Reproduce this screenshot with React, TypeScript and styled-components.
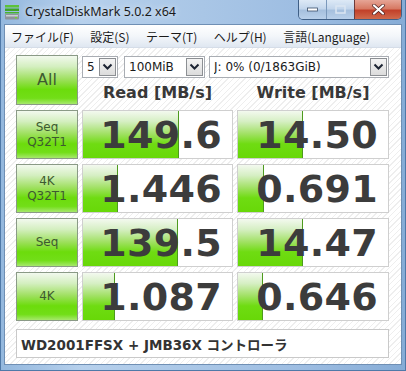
import { Fragment } from "react";
import styled, { createGlobalStyle } from "styled-components";

const GlobalStyle = createGlobalStyle`
  html, body { margin: 0; padding: 0; background: #ffffff; }
  body { width: 406px; height: 371px; overflow: hidden; }
`;

const Window = styled.div`
  width: 406px;
  height: 371px;
  box-sizing: border-box;
  display: flex;
  flex-direction: column;
  background: linear-gradient(to right, #94b8de 0%, #b6d0ec 20%, #a9c6e6 50%, #9dbde2 75%, #86acd6 100%);
  border: 1px solid #4f79a8;
  border-top: none;
  padding: 0 3px 5px 3px;
`;

const TitleBar = styled.div`
  height: 24px;
  display: flex;
  align-items: flex-start;
  flex-shrink: 0;
`;

const TitleIcon = styled.svg`
  width: 16px;
  height: 16px;
  margin: 4px 5px 0 0;
  flex-shrink: 0;
`;

const TitleText = styled.div`
  font-family: "Noto Sans", "Open Sans", sans-serif;
  font-size: 12.5px;
  line-height: 24px;
  color: #1b1b1b;
  text-shadow: 0 0 6px rgba(255, 255, 255, 0.9);
`;

const Controls = styled.div`
  display: flex;
  margin-left: auto;
  height: 19px;
  border: 1px solid #3f5f86;
  border-top: none;
  border-radius: 0 0 5px 5px;
  overflow: hidden;
`;

const CtrlButton = styled.div<{ $w: number; $close?: boolean }>`
  width: ${(p) => p.$w}px;
  display: flex;
  align-items: center;
  justify-content: center;
  border-left: ${(p) => (p.$close ? "1px solid #6b3a3a" : "1px solid #7a98bb")};
  background: ${(p) =>
    p.$close
      ? "linear-gradient(to bottom, #e6a596 0%, #d77a64 45%, #c2412a 55%, #cf6a4c 100%)"
      : "linear-gradient(to bottom, #dde9f6 0%, #c3d6ec 45%, #a6c0de 55%, #b9d0ea 100%)"};
  &:first-child { border-left: none; }
`;

const Client = styled.div`
  flex: 1;
  display: flex;
  flex-direction: column;
  border: 1px solid #6f8fb4;
  background: repeating-linear-gradient(135deg, #ffffff 0px, #ffffff 3px, #eeeeee 3px, #eeeeee 4px);
`;

const MenuBar = styled.div`
  height: 23px;
  display: flex;
  align-items: center;
  gap: 16.5px;
  padding-left: 6px;
  background: linear-gradient(to bottom, #ffffff 0%, #f3f6fa 50%, #dfe7f1 100%);
  border-bottom: 1px solid #d5dde8;
  box-sizing: border-box;
`;

const MenuItem = styled.span`
  font-family: "Noto Sans CJK JP", "Noto Sans", sans-serif;
  font-size: 12px;
  color: #1a1a1a;
`;

const Body = styled.div`
  padding: 7px 0 0 11px;
`;

const Grid = styled.div`
  display: grid;
  grid-template-columns: 62px 151px 152px;
  grid-template-rows: 50px repeat(4, 49px);
  column-gap: 4px;
  row-gap: 5px;
`;

const LabelButton = styled.div<{ $big?: boolean }>`
  box-sizing: border-box;
  border: 1px solid #8a9a86;
  display: flex;
  flex-direction: column;
  align-items: center;
  justify-content: center;
  background: linear-gradient(to bottom, #f2f9ee 0%, #d4efc0 22%, #9fe060 48%, #6cdc0c 70%, #72de18 88%, #a6e86c 100%);
  font-family: "DejaVu Sans", Verdana, sans-serif;
  font-size: ${(p) => (p.$big ? "16px" : "12px")};
  line-height: ${(p) => (p.$big ? "18px" : "15px")};
  color: #3d5a30;
`;

const TopCell = styled.div`
  grid-column: 2 / 4;
  display: flex;
  flex-direction: column;
`;

const SelectRow = styled.div`
  display: flex;
  height: 22px;
  margin-top: 1px;
`;

const Select = styled.div<{ $w?: number; $gap?: number }>`
  box-sizing: border-box;
  ${(p) => (p.$w ? `width: ${p.$w}px; flex-shrink: 0;` : "flex: 1;")}
  margin-right: ${(p) => p.$gap ?? 0}px;
  display: flex;
  align-items: center;
  background: #ffffff;
  border: 1px solid #a9adb3;
  font-family: "DejaVu Sans", Verdana, sans-serif;
  font-size: 12px;
  color: #1a1a1a;
  padding: 0 1px 0 4px;
`;

const SelectText = styled.span`
  flex: 1;
  white-space: nowrap;
  overflow: hidden;
`;

const Arrow = styled.div`
  width: 17px;
  height: 18px;
  box-sizing: border-box;
  border: 1px solid #8c8f93;
  background: linear-gradient(to bottom, #f4f4f4, #dcdcdc);
  display: flex;
  align-items: center;
  justify-content: center;
`;

const Headers = styled.div`
  flex: 1;
  display: grid;
  grid-template-columns: 151px 152px;
  column-gap: 4px;
  align-items: center;
`;

const Header = styled.div`
  text-align: center;
  font-family: "DejaVu Sans", Verdana, sans-serif;
  font-weight: bold;
  font-size: 16px;
  color: #383838;
  padding-top: 2px;
`;

const ValueBox = styled.div`
  position: relative;
  box-sizing: border-box;
  border: 1px solid #cfcfcf;
  background: #ffffff;
  overflow: hidden;
  display: flex;
  align-items: center;
  justify-content: flex-end;
  padding-right: 10px;
`;

const Bar = styled.div`
  position: absolute;
  left: 0;
  top: 0;
  bottom: 0;
  border-right: 1px solid #4d9a1e;
  background: linear-gradient(to bottom, #f3f9ef 0%, #d6efc4 22%, #a2e166 48%, #6fdc12 70%, #68d808 100%);
`;

const Value = styled.span`
  position: relative;
  font-family: "DejaVu Sans", Verdana, sans-serif;
  font-weight: bold;
  font-size: 38px;
  line-height: 1;
  color: #3c3c3c;
  letter-spacing: 0.3px;
`;

const Comment = styled.div`
  margin-top: 8px;
  width: 373px;
  height: 29px;
  box-sizing: border-box;
  border: 1px solid #c9c9c9;
  background: #ffffff;
  display: flex;
  align-items: center;
  padding-left: 4px;
  font-family: "DejaVu Sans", Verdana, "Noto Sans CJK JP", sans-serif;
  font-weight: bold;
  font-size: 13.5px;
  color: #333333;
`;

const rows = [
  { label: ["Seq", "Q32T1"], read: "149.6", rw: 95, write: "14.50", ww: 64 },
  { label: ["4K", "Q32T1"], read: "1.446", rw: 34, write: "0.691", ww: 25 },
  { label: ["Seq"], read: "139.5", rw: 94, write: "14.47", ww: 64 },
  { label: ["4K"], read: "1.087", rw: 31, write: "0.646", ww: 24 },
];

function Chevron() {
  return (
    <svg width="11" height="8" viewBox="0 0 11 8">
      <path d="M1.5 1.5 L5.5 5.5 L9.5 1.5" fill="none" stroke="#1c2433" strokeWidth="2" />
    </svg>
  );
}

export default function App() {
  return (
    <>
      <GlobalStyle />
      <Window>
        <TitleBar>
          <TitleIcon viewBox="0 0 16 16">
            <rect x="1" y="1" width="14" height="2.5" fill="#5cc23a" />
            <rect x="1" y="4.5" width="14" height="2.5" fill="#3fa526" />
            <rect x="1" y="8" width="14" height="1.5" fill="#4bb22e" />
            <rect x="1" y="10" width="14" height="5.5" rx="1" fill="#8e949a" />
            <rect x="2" y="11" width="12" height="1.5" fill="#c9ced3" />
            <rect x="11" y="13" width="2" height="1.3" fill="#6fdc2a" />
          </TitleIcon>
          <TitleText>CrystalDiskMark 5.0.2 x64</TitleText>
          <Controls>
            <CtrlButton $w={27}>
              <svg width="11" height="5" viewBox="0 0 11 5">
                <rect x="0.5" y="1" width="10" height="3" fill="#ffffff" stroke="#3a4f6a" strokeWidth="0.8" />
              </svg>
            </CtrlButton>
            <CtrlButton $w={27}>
              <svg width="11" height="9" viewBox="0 0 11 9">
                <rect x="1" y="1" width="9" height="7" fill="none" stroke="#dbe6f2" strokeWidth="1.5" />
              </svg>
            </CtrlButton>
            <CtrlButton $w={46} $close>
              <svg width="13" height="11" viewBox="0 0 13 11">
                <path d="M2 1.5 L11 9.5 M11 1.5 L2 9.5" stroke="#4a2020" strokeWidth="3.6" strokeLinecap="round" />
                <path d="M2 1.5 L11 9.5 M11 1.5 L2 9.5" stroke="#ffffff" strokeWidth="2.2" strokeLinecap="round" />
              </svg>
            </CtrlButton>
          </Controls>
        </TitleBar>
        <Client>
          <MenuBar>
            <MenuItem>ファイル(F)</MenuItem>
            <MenuItem>設定(S)</MenuItem>
            <MenuItem>テーマ(T)</MenuItem>
            <MenuItem>ヘルプ(H)</MenuItem>
            <MenuItem>言語(Language)</MenuItem>
          </MenuBar>
          <Body>
            <Grid>
              <LabelButton $big>All</LabelButton>
              <TopCell>
                <SelectRow>
                  <Select $w={36} $gap={6}>
                    <SelectText>5</SelectText>
                    <Arrow>
                      <Chevron />
                    </Arrow>
                  </Select>
                  <Select $w={81} $gap={4}>
                    <SelectText>100MiB</SelectText>
                    <Arrow>
                      <Chevron />
                    </Arrow>
                  </Select>
                  <Select>
                    <SelectText>J: 0% (0/1863GiB)</SelectText>
                    <Arrow>
                      <Chevron />
                    </Arrow>
                  </Select>
                </SelectRow>
                <Headers>
                  <Header>Read [MB/s]</Header>
                  <Header>Write [MB/s]</Header>
                </Headers>
              </TopCell>
              {rows.map((r) => (
                <Fragment key={r.read}>
                  <LabelButton>
                    {r.label.map((t) => (
                      <span key={t}>{t}</span>
                    ))}
                  </LabelButton>
                  <ValueBox>
                    <Bar style={{ width: r.rw }} />
                    <Value>{r.read}</Value>
                  </ValueBox>
                  <ValueBox>
                    <Bar style={{ width: r.ww }} />
                    <Value>{r.write}</Value>
                  </ValueBox>
                </Fragment>
              ))}
            </Grid>
            <Comment>WD2001FFSX + JMB36X コントローラ</Comment>
          </Body>
        </Client>
      </Window>
    </>
  );
}
